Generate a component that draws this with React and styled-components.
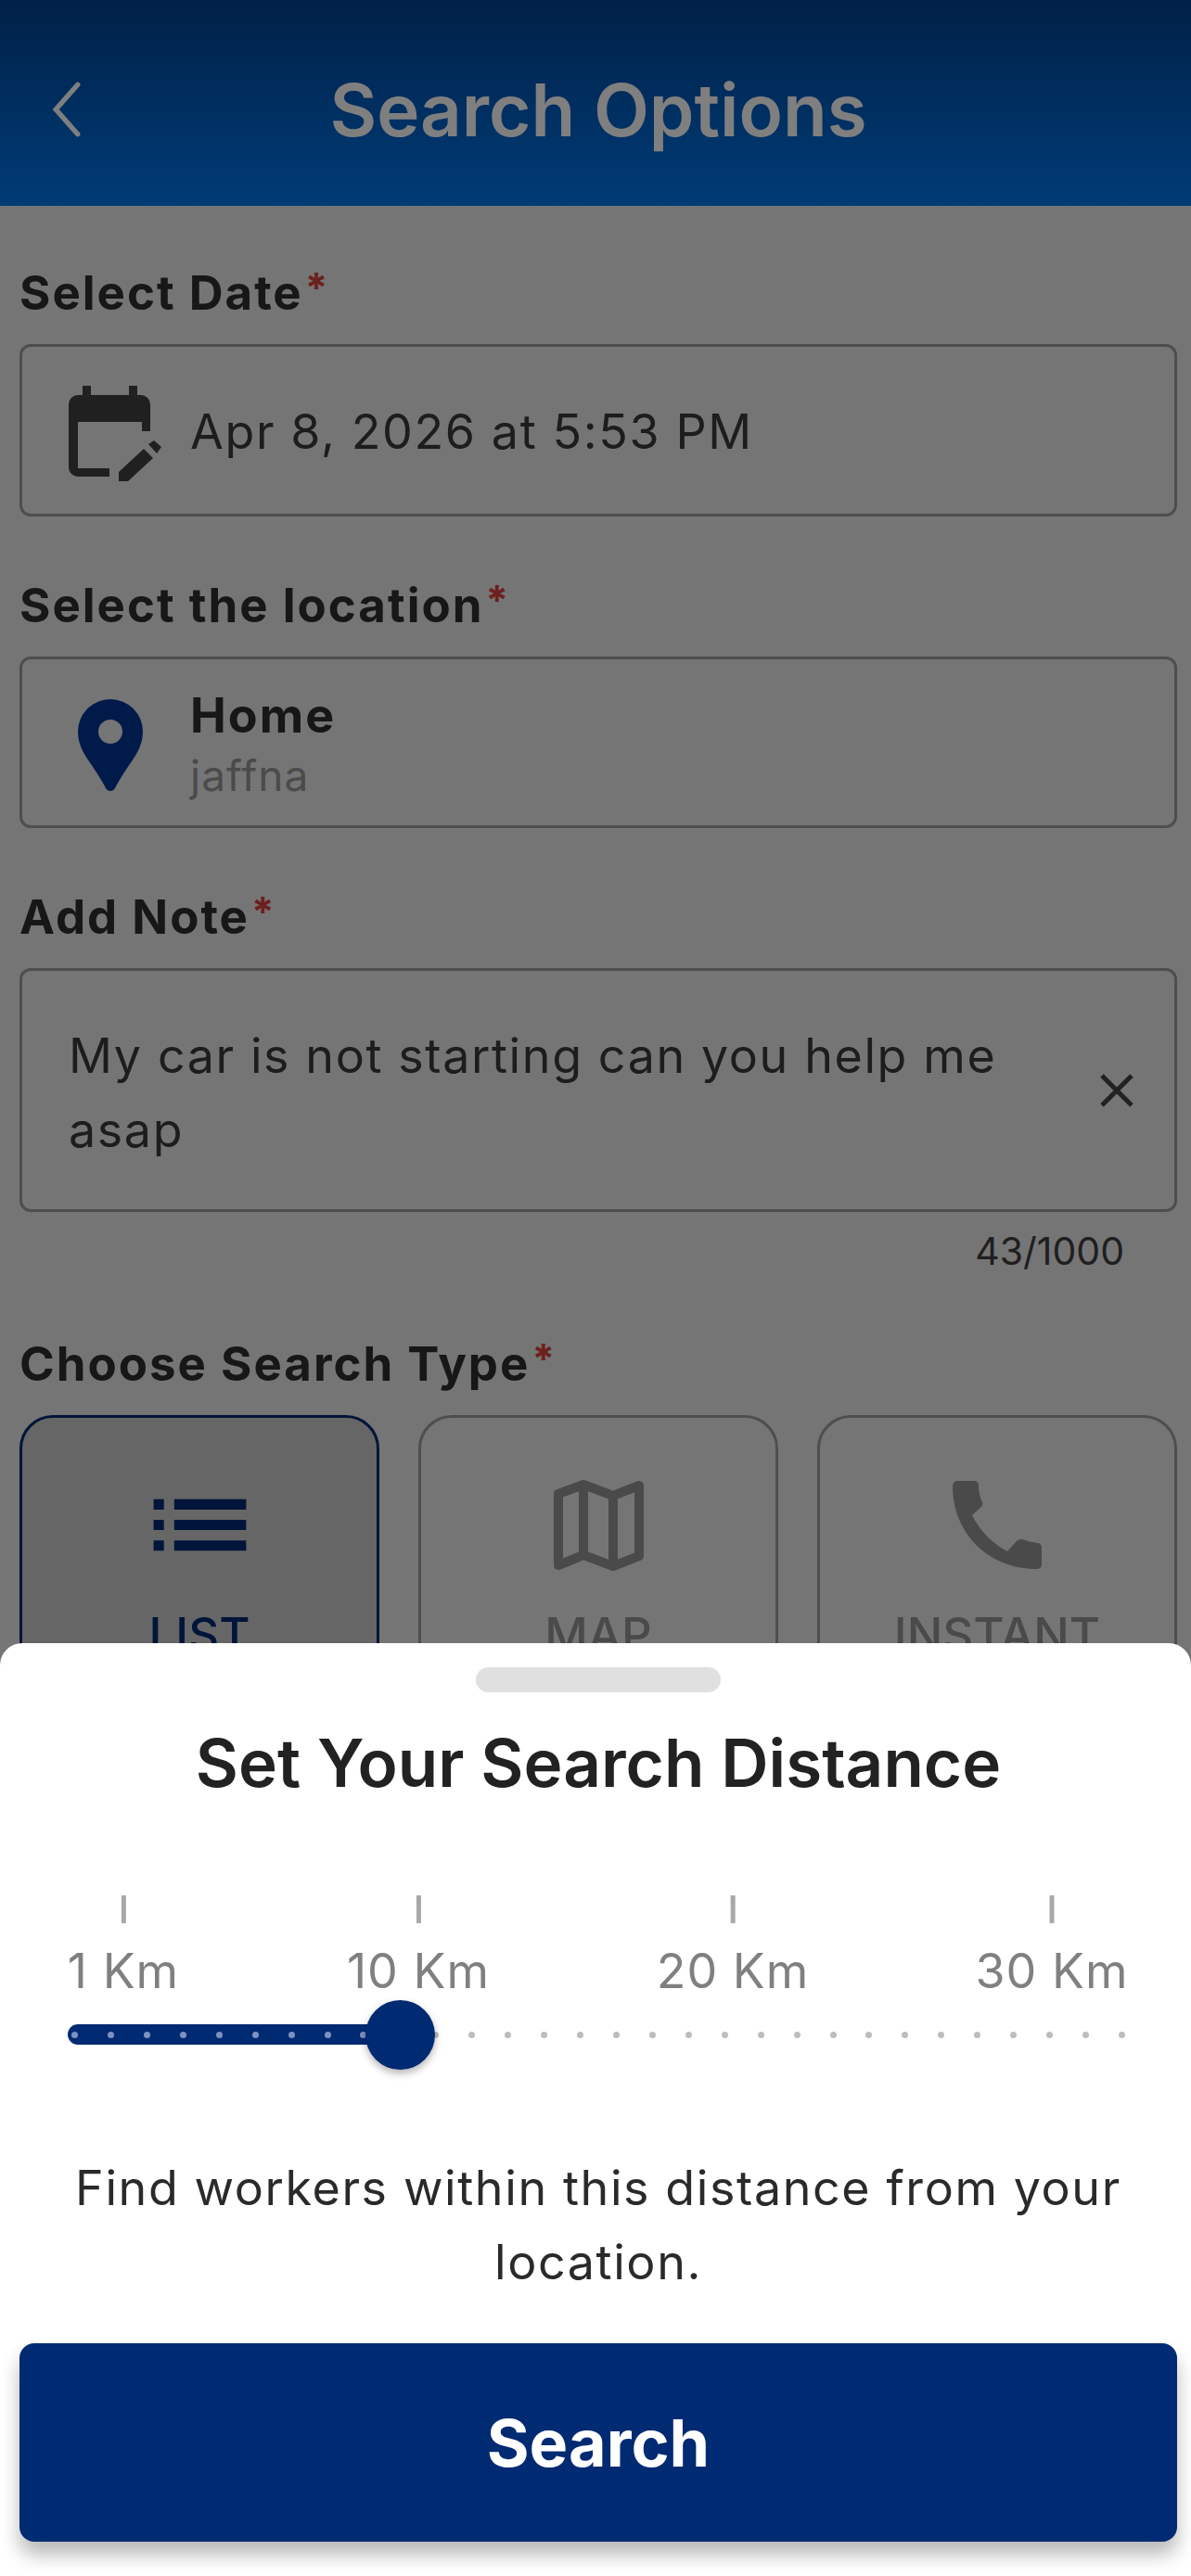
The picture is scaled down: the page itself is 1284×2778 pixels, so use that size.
import React from 'react'
import styled, { createGlobalStyle } from 'styled-components'

const GlobalStyle = createGlobalStyle`
  html, body { margin: 0; padding: 0; background: #ebebeb; }
  * { box-sizing: border-box; }
  body { font-family: Inter, "Noto Sans", sans-serif; }
`

const Screen = styled.div`
  position: relative;
  width: 1284px;
  height: 2778px;
  overflow: hidden;
  background: #ebebeb;
`
const Header = styled.header`
  height: 222px;
  background: linear-gradient(180deg, #00418f 0%, #0078ee 100%);
  display: flex;
  align-items: center;
  justify-content: center;
  position: relative;
  padding: 14px 0 0 6px;
`
const BackButton = styled.div`
  position: absolute;
  left: 50px;
  top: 88px;
  color: #fff;
  display: flex;
`
const HeaderTitle = styled.h1`
  margin: 0;
  font-size: 78px;
  font-weight: 600;
  color: #fff;
`
const Form = styled.main`
  padding: 64px 15px 0 21px;
`
const Field = styled.section`
  margin-bottom: 66px;
`
const Label = styled.div`
  font-size: 51px;
  line-height: 60px;
  font-weight: 700;
  letter-spacing: 2px;
  color: #2e2e2e;
  margin-bottom: 25px;
  span { color: #d9403a; font-size: 44px; line-height: 0; vertical-align: 8px; letter-spacing: 0; margin-left: 2px; }
`
const InputBox = styled.div`
  border: 3px solid #9c9c9c;
  border-radius: 12px;
  display: flex;
  align-items: center;
  padding: 0 44px 0 50px;
  height: ${p => p.$h}px;
`
const IconSlot = styled.div`
  width: 131px;
  display: flex;
  flex: none;
  padding-top: 7px;
  padding-left: ${p => p.$pad || 0}px;
`
const Value = styled.div`
  font-size: 52px;
  letter-spacing: 1.6px;
  color: #3a3a3a;
  padding-top: 2px;
`
const Place = styled.div`
  padding-top: 6px;
`
const Strong = styled.div`
  font-size: 52px;
  line-height: 64px;
  font-weight: 700;
  letter-spacing: 2px;
  color: #2e2e2e;
`
const Sub = styled.div`
  font-size: 46px;
  line-height: 64px;
  letter-spacing: 1px;
  color: #969696;
`
const Note = styled.div`
  flex: 1;
  font-size: 52px;
  line-height: 80px;
  letter-spacing: 1.6px;
  color: #3a3a3a;
  padding: 7px 40px 0 0;
`
const Counter = styled.div`
  text-align: right;
  font-size: 41px;
  line-height: 50px;
  color: #3f3f3f;
  padding: 17px 57px 0 0;
  margin-bottom: 67px;
`
const TypeRow = styled.div`
  display: flex;
  gap: 42px;
`
const TypeCard = styled.div`
  flex: 1;
  height: 290px;
  border: 3px solid ${p => (p.$active ? '#002a6e' : '#9c9c9c')};
  background: ${p => (p.$active ? '#cdcdcd' : 'transparent')};
  border-radius: 36px;
  display: flex;
  flex-direction: column;
  align-items: center;
  padding-top: 49px;
  color: ${p => (p.$active ? '#002a72' : '#949494')};
  font-size: 51px;
  line-height: 60px;
  font-weight: 500;
`
const TypeIcon = styled.div`
  height: 133px;
  margin-bottom: 22px;
  display: flex;
  align-items: center;
`
const Dim = styled.div`
  position: absolute;
  inset: 0;
  background: rgba(0, 0, 0, 0.5);
`
const Sheet = styled.div`
  position: absolute;
  left: 0;
  right: 0;
  bottom: 0;
  height: 1006px;
  background: #fff;
  border-radius: 24px 24px 0 0;
  display: flex;
  flex-direction: column;
  align-items: center;
  padding: 26px 15px 0 21px;
`
const Handle = styled.div`
  width: 264px;
  height: 27px;
  border-radius: 14px;
  background: #e0e0e0;
`
const SheetTitle = styled.h2`
  margin: 31px 0 0;
  font-size: 71px;
  line-height: 90px;
  font-weight: 600;
  color: #222;
`
const Ticks = styled.div`
  position: relative;
  align-self: stretch;
  height: 129px;
  margin-top: 98px;
`
const Tick = styled.div`
  position: absolute;
  top: 0;
  transform: translateX(-50%);
  display: flex;
  flex-direction: column;
  align-items: center;
  font-size: 52px;
  line-height: 60px;
  letter-spacing: 1px;
  color: #808080;
  white-space: nowrap;
  &::before {
    content: '';
    width: 5px;
    height: 30px;
    background: #a8a8a8;
    margin-bottom: 22px;
  }
`
const Slider = styled.div`
  position: relative;
  align-self: stretch;
  height: 80px;
`
const Track = styled.div`
  position: absolute;
  left: 52px;
  top: 10px;
  width: 366px;
  height: 22px;
  border-radius: 11px;
  background: #002a72;
`
const Dot = styled.div`
  position: absolute;
  top: 18px;
  width: 7px;
  height: 7px;
  border-radius: 50%;
  background: ${p => (p.$on ? '#7d92c2' : '#bdbdbd')};
`
const Thumb = styled.div`
  position: absolute;
  left: 373px;
  top: -16px;
  width: 75px;
  height: 75px;
  border-radius: 50%;
  background: #002a72;
  box-shadow: 0 4px 8px rgba(0, 0, 0, 0.3);
`
const Hint = styled.p`
  margin: 67px 0 0;
  padding: 0 30px;
  font-size: 52px;
  line-height: 80px;
  letter-spacing: 1.6px;
  text-align: center;
  color: #2a2a2a;
`
const SearchButton = styled.button`
  margin-top: 47px;
  align-self: stretch;
  height: 214px;
  border: 0;
  border-radius: 16px;
  background: #002a72;
  color: #fff;
  font: 700 70px Inter, sans-serif;
  box-shadow: 0 14px 20px rgba(0, 0, 0, 0.28);
`

const CalendarEdit = () => (
  <svg width="102" height="103" viewBox="74 417 102 103" fill="#404040">
    <path d="M89 417h9v10h41v-10h9v10h4a10 10 0 0 1 10 10v29h-9v-10H84v50h34v9H84a10 10 0 0 1-10-10V437a10 10 0 0 1 10-10h5z" />
    <path d="M128 510v10h10l27-25-10-10zM160 480l6-4 8 7-5 7z" />
  </svg>
)
const Pin = () => (
  <svg width="70" height="100" viewBox="84 754 70 100" fill="#003494">
    <path fillRule="evenodd" d="M119 754a35 35 0 0 1 35 35c0 12-5 22-12 32-7 10-14 21-18 29-2 4-8 4-10 0-4-8-11-19-18-29-7-10-12-20-12-32a35 35 0 0 1 35-35zm0 22a13 13 0 1 0 0 26 13 13 0 0 0 0-26z" />
  </svg>
)
const Close = () => (
  <svg width="36" height="36" viewBox="0 0 36 36" stroke="#444" strokeWidth="5" fill="none">
    <path d="M2 2l32 32M34 2L2 34" />
  </svg>
)
const Back = () => (
  <svg width="44" height="60" viewBox="0 0 30 56" stroke="#fff" strokeWidth="5" strokeLinecap="round" fill="none">
    <path d="M26 3L4 28l22 25" />
  </svg>
)
const ListIcon = () => (
  <svg width="133" height="133" viewBox="0 0 24 24" fill="#002a72">
    <path d="M3 13h2v-2H3v2zm0 4h2v-2H3v2zm0-8h2V7H3v2zm4 4h14v-2H7v2zm0 4h14v-2H7v2zm0-10v2h14V7H7z" />
  </svg>
)
const MapIcon = () => (
  <svg width="97" height="98" viewBox="596 1596 97 98" fill="none" stroke="#949494" strokeWidth="10" strokeLinejoin="round">
    <path d="M601 1611L628 1601L660 1613L688 1602V1678L660 1689L628 1677L601 1688ZM628 1601V1677M660 1613V1689" />
  </svg>
)
const PhoneIcon = () => (
  <svg width="100" height="98" viewBox="1024 1596 100 98" fill="#949494">
    <path d="M1031 1597h18c3 0 5 2 5 5 0 6 1 12 4 18 1 2 0 4-1 5l-10 9c8 16 21 30 38 39l10-11c2-2 4-2 6-2 6 2 11 3 16 4 3 0 5 2 5 5v18c0 3-2 5-5 5C1063 1692 1026 1652 1026 1603c0-3 2-6 5-6z" />
  </svg>
)

const ticks = [
  { x: 112, label: '1 Km' },
  { x: 430, label: '10 Km' },
  { x: 769, label: '20 Km' },
  { x: 1113, label: '30 Km' },
]
const dots = Array.from({ length: 30 }, (_, i) => 56 + i * 38.93)

export default function App() {
  return (
    <Screen>
      <GlobalStyle />
      <Header>
        <BackButton><Back /></BackButton>
        <HeaderTitle>Search Options</HeaderTitle>
      </Header>
      <Form>
        <Field>
          <Label>Select Date<span>*</span></Label>
          <InputBox $h={186}>
            <IconSlot><CalendarEdit /></IconSlot>
            <Value>Apr 8, 2026 at 5:53 PM</Value>
          </InputBox>
        </Field>
        <Field>
          <Label>Select the location<span>*</span></Label>
          <InputBox $h={185}>
            <IconSlot $pad={10}><Pin /></IconSlot>
            <Place>
              <Strong>Home</Strong>
              <Sub>jaffna</Sub>
            </Place>
          </InputBox>
        </Field>
        <div>
          <Label>Add Note<span>*</span></Label>
          <InputBox $h={263}>
            <Note>My car is not starting can you help me asap</Note>
            <Close />
          </InputBox>
          <Counter>43/1000</Counter>
        </div>
        <Field>
          <Label>Choose Search Type<span>*</span></Label>
          <TypeRow>
            <TypeCard $active><TypeIcon><ListIcon /></TypeIcon>LIST</TypeCard>
            <TypeCard><TypeIcon><MapIcon /></TypeIcon>MAP</TypeCard>
            <TypeCard><TypeIcon><PhoneIcon /></TypeIcon>INSTANT</TypeCard>
          </TypeRow>
        </Field>
      </Form>
      <Dim />
      <Sheet>
        <Handle />
        <SheetTitle>Set Your Search Distance</SheetTitle>
        <Ticks>
          {ticks.map(t => (
            <Tick key={t.label} style={{ left: t.x }}>{t.label}</Tick>
          ))}
        </Ticks>
        <Slider>
          <Track />
          {dots.map((x, i) => (
            <Dot key={i} $on={x < 400} style={{ left: x }} />
          ))}
          <Thumb />
        </Slider>
        <Hint>Find workers within this distance from your location.</Hint>
        <SearchButton>Search</SearchButton>
      </Sheet>
    </Screen>
  )
}
